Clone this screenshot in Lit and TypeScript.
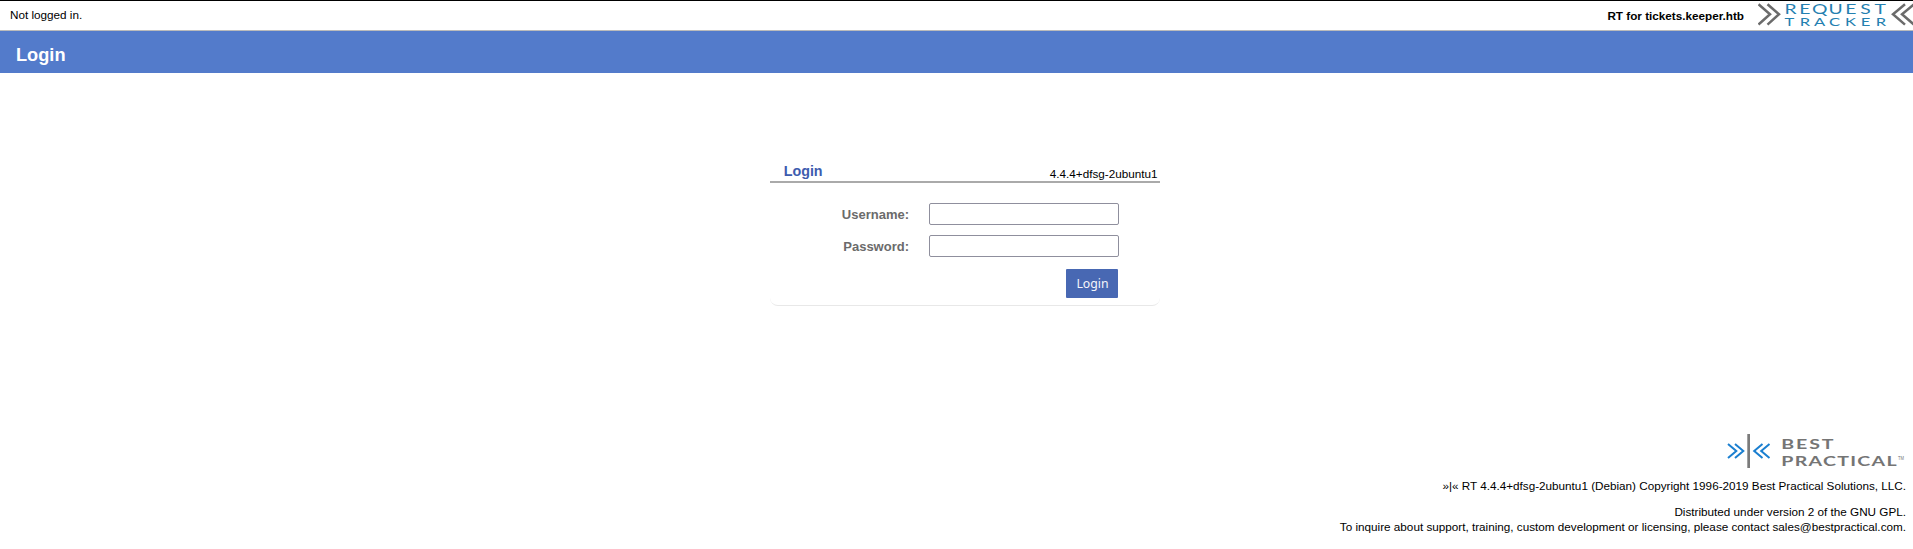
import { LitElement, html, css, svg } from "lit";
import { customElement } from "lit/decorators.js";

const WIDE = 1.38;
const centres = (xs: number[]) => xs.map((x) => (x / WIDE).toFixed(2)).join(" ");

@customElement("rt-logo")
class RtLogo extends LitElement {
  static styles = css`
    :host { display: block; width: 155px; height: 28px; }
    svg { display: block; }
    .mark { fill: none; stroke: #6b6b6b; stroke-width: 2.5; }
    .word { fill: #2480b0; font-family: "Lato", sans-serif; text-anchor: middle; }
    .large { font-size: 14px; }
    .small { font-size: 12px; }
  `;
  render() {
    const row = (word: string, size: string, y: number, xs: number[]) =>
      svg`<text class="word ${size}" transform="scale(${WIDE} 1)" x=${centres(xs)} y=${y}>${word}</text>`;
    return html`<svg width="155" height="28" viewBox="0 0 155 28">
      <path class="mark" d="M0.500 3.300 12 13.300 0.500 23.600M9.500 3.300 21 13.300 9.500 23.600" />
      <path class="mark" d="M147 3.300 135 13.300 147 23.600M156 3.300 144 13.300 156 23.600" />
      ${row("REQUEST", "large", 13.1, [32.5, 46.8, 61.7, 77.7, 92.8, 107.5, 122.3])}
      ${row("TRACKER", "small", 24.9, [31.5, 47, 61.5, 76.5, 92.5, 107.5, 123])}
    </svg>`;
  }
}

@customElement("bp-logo")
class BpLogo extends LitElement {
  static styles = css`
    :host { display: block; width: 179px; height: 36px; }
    svg { display: block; }
    .mark { fill: none; stroke: #1b7fd0; stroke-width: 2; }
    .bar { fill: #7b7b7b; }
    .word { fill: #757575; font: 700 13.5px "Lato", sans-serif; }
    .tm { fill: #757575; font-family: "Liberation Sans", sans-serif; }
  `;
  render() {
    return html`<svg width="179" height="36" viewBox="0 0 179 36">
      <path class="mark" d="M1 10 9.300 17 1 24M8 10 16.300 17 8 24M35.500 10 27.200 17 35.500 24M42.500 10 34.200 17 42.500 24" />
      <rect class="bar" x="20.300" y="0" width="2.700" height="34" />
      <g transform="translate(54.300 0) scale(1.450 1)">
        <text class="word" x="0" y="15" textLength="36" lengthAdjust="spacing">BEST</text>
        <text class="word" x="0" y="32" textLength="79.500" lengthAdjust="spacing">PRACTICAL</text>
      </g>
      <text class="tm" x="171" y="25.500" font-size="4.500" textLength="6" lengthAdjust="spacingAndGlyphs">TM</text>
    </svg>`;
  }
}

@customElement("app-root")
class AppRoot extends LitElement {
  static styles = css`
    :host {
      display: block;
      height: 549px;
      overflow: hidden;
      box-sizing: border-box;
      background: #fff;
      color: #000;
      font: 11.71px/15px "Liberation Sans", Arial, sans-serif;
    }
    .top {
      box-sizing: border-box;
      height: 31px;
      border-top: 1px solid #000;
      border-bottom: 1px solid #bbb;
      padding-left: 10px;
      display: flex;
      justify-content: space-between;
    }
    .status { padding-top: 6px; }
    .brand { display: flex; }
    .site { font-weight: bold; padding-top: 7px; margin-right: 14px; }
    .banner { height: 42px; background: #537bcb; padding-left: 16px; box-sizing: border-box; }
    h1 { margin: 0; font-size: 18.2px; line-height: 48px; color: #fff; }
    .panel {
      box-sizing: border-box;
      width: 390px;
      height: 149px;
      margin: 84px 0 0 770px;
      border-bottom: 1px solid #e8e8e8;
      border-radius: 8px;
    }
    .head {
      box-sizing: border-box;
      height: 26px;
      border-bottom: 2px solid #aaa;
      padding: 0 2.5px 0 13.7px;
      display: flex;
      justify-content: space-between;
    }
    h2 { margin: 0; font-size: 14.3px; line-height: 29px; color: #3d5cae; }
    .version { padding-top: 9px; }
    form { padding-top: 20px; display: grid; grid-template-columns: 139px 190px; column-gap: 20px; row-gap: 10px; }
    label { height: 22px; font-size: 13px; font-weight: bold; line-height: 24px; color: #6b6b6b; text-align: right; }
    input {
      box-sizing: border-box;
      width: 190px;
      height: 22px;
      margin: 0;
      padding: 1px 2px;
      border: 1px solid #8f8f9d;
      border-radius: 2px;
      background: #fff;
      display: block;
    }
    button {
      grid-column: 2;
      justify-self: end;
      width: 52px;
      height: 29px;
      margin: 2px 1px 0 0;
      padding: 0;
      border: 0;
      border-radius: 1px;
      background: #4868b3;
      color: #f4f6fb;
      font: 13.33px/29px "Noto Sans", sans-serif;
    }
    .caption { display: inline-block; transform: scaleX(0.92); }
    footer { margin-top: 128px; padding-right: 7px; display: flex; flex-direction: column; align-items: flex-end; }
    .copy { margin: 8px 0 11px; }
    p { margin: 0; }
  `;
  render() {
    return html`
      <div class="top">
        <div class="status">Not logged in.</div>
        <div class="brand">
          <div class="site">RT for tickets.keeper.htb</div>
          <rt-logo></rt-logo>
        </div>
      </div>
      <div class="banner"><h1>Login</h1></div>
      <section class="panel">
        <div class="head"><h2>Login</h2><span class="version">4.4.4+dfsg-2ubuntu1</span></div>
        <form>
          <label for="user">Username:</label><input id="user" type="text" />
          <label for="pass">Password:</label><input id="pass" type="password" />
          <button type="button"><span class="caption">Login</span></button>
        </form>
      </section>
      <footer>
        <bp-logo></bp-logo>
        <p class="copy">»|« RT 4.4.4+dfsg-2ubuntu1 (Debian) Copyright 1996-2019 Best Practical Solutions, LLC.</p>
        <p>Distributed under version 2 of the GNU GPL.</p>
        <p>To inquire about support, training, custom development or licensing, please contact sales@bestpractical.com.</p>
      </footer>
    `;
  }
}
